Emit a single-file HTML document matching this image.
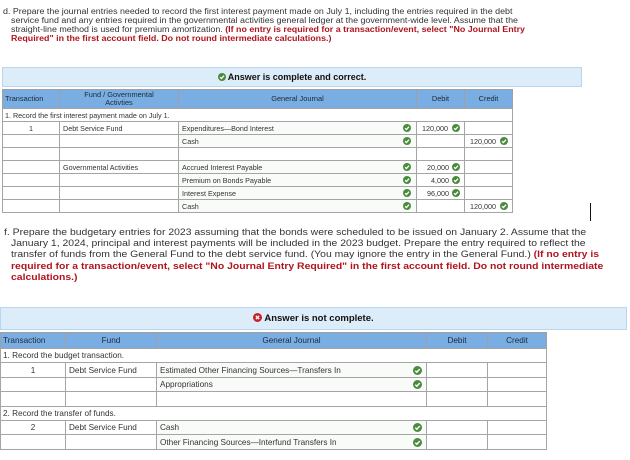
<!DOCTYPE html>
<html><head><meta charset="utf-8"><style>
*{margin:0;padding:0;box-sizing:border-box}
body{width:630px;height:460px;background:#fff;position:relative;overflow:hidden;font-family:"Liberation Sans",Arial,sans-serif;color:#222}
.a{position:absolute;white-space:nowrap;transform-origin:0 0}
.p1{font-size:8px;color:#333;line-height:9px;transform:scaleX(1.11)}
.p2{font-size:9.6px;color:#333;line-height:11px;transform:scaleX(1.085)}
.r{color:#b0141e;font-weight:bold}
.ban{position:absolute;background:#dcecf9;border:1px solid #b9d6f0;font-size:9px;font-weight:bold;color:#111;text-align:center}
.h{position:absolute;background:#7aaee2;border:1px solid #a0a0a0;font-size:7.4px;color:#1a2a3a;display:flex;align-items:center;justify-content:center;text-align:center;line-height:8px}
.c{position:absolute;border:1px solid #a5a5a5;font-size:7.2px;color:#333;display:flex;align-items:center;padding-left:3px;background:#fff}
.g{background:#f8fbf7}
.k{position:absolute;width:8px;height:8px}
.t2 .c,.t2 .h{font-size:8.2px}
</style></head><body>
<svg width="0" height="0" style="position:absolute"><defs><symbol id="ck" viewBox="0 0 10 10"><circle cx="5" cy="5" r="5" fill="#4a8b3d"/><path d="M2.6 5.2 L4.3 6.9 L7.5 3.4" stroke="#fff" stroke-width="1.6" fill="none"/></symbol></defs></svg>

<div class="a p1" style="left:3px;top:7px">d. Prepare the journal entries needed to record the first interest payment made on July 1, including the entries required in the debt</div>
<div class="a p1" style="left:11px;top:16px">service fund and any entries required in the governmental activities general ledger at the government-wide level. Assume that the</div>
<div class="a p1" style="left:11px;top:25px">straight-line method is used for premium amortization. <span class="r">(If no entry is required for a transaction/event, select "No Journal Entry</span></div>
<div class="a p1 r" style="left:11px;top:34px">Required" in the first account field. Do not round intermediate calculations.)</div>

<div class="ban" style="left:2px;top:67px;width:580px;height:20px;line-height:19px"><svg class="k" style="position:relative;top:1px;margin-right:2px" viewBox="0 0 10 10"><use href="#ck"/></svg>Answer is complete and correct.</div>

<div class="h" style="left:2px;top:89px;width:58px;height:20px;justify-content:flex-start;padding-left:2px">Transaction</div>
<div class="h" style="left:59px;top:89px;width:120px;height:20px">Fund / Governmental<br>Activties</div>
<div class="h" style="left:178px;top:89px;width:239px;height:20px">General Journal</div>
<div class="h" style="left:416px;top:89px;width:49px;height:20px">Debit</div>
<div class="h" style="left:464px;top:89px;width:49px;height:20px">Credit</div>

<div class="c" style="left:2px;top:108px;width:511px;height:14px;padding-left:2px">1. Record the first interest payment made on July 1.</div>

<div class="c" style="left:2px;top:121px;width:58px;height:14px;justify-content:center;padding:0">1</div>
<div class="c" style="left:59px;top:121px;width:120px;height:14px">Debt Service Fund</div>
<div class="c g" style="left:178px;top:121px;width:239px;height:14px">Expenditures—Bond Interest</div>
<div class="c" style="left:416px;top:121px;width:49px;height:14px">&nbsp;120,000</div>
<div class="c" style="left:464px;top:121px;width:49px;height:14px"></div>

<div class="c" style="left:2px;top:134px;width:58px;height:14px"></div>
<div class="c" style="left:59px;top:134px;width:120px;height:14px"></div>
<div class="c g" style="left:178px;top:134px;width:239px;height:14px">Cash</div>
<div class="c" style="left:416px;top:134px;width:49px;height:14px"></div>
<div class="c" style="left:464px;top:134px;width:49px;height:14px">&nbsp;120,000</div>

<div class="c" style="left:2px;top:147px;width:58px;height:14px"></div>
<div class="c" style="left:59px;top:147px;width:120px;height:14px"></div>
<div class="c" style="left:178px;top:147px;width:239px;height:14px"></div>
<div class="c" style="left:416px;top:147px;width:49px;height:14px"></div>
<div class="c" style="left:464px;top:147px;width:49px;height:14px"></div>

<div class="c" style="left:2px;top:160px;width:58px;height:14px"></div>
<div class="c" style="left:59px;top:160px;width:120px;height:14px">Governmental Activities</div>
<div class="c g" style="left:178px;top:160px;width:239px;height:14px">Accrued Interest Payable</div>
<div class="c" style="left:416px;top:160px;width:49px;height:14px;padding-left:10px">20,000</div>
<div class="c" style="left:464px;top:160px;width:49px;height:14px"></div>

<div class="c" style="left:2px;top:173px;width:58px;height:14px"></div>
<div class="c" style="left:59px;top:173px;width:120px;height:14px"></div>
<div class="c g" style="left:178px;top:173px;width:239px;height:14px">Premium on Bonds Payable</div>
<div class="c" style="left:416px;top:173px;width:49px;height:14px;padding-left:14px">4,000</div>
<div class="c" style="left:464px;top:173px;width:49px;height:14px"></div>

<div class="c" style="left:2px;top:186px;width:58px;height:14px"></div>
<div class="c" style="left:59px;top:186px;width:120px;height:14px"></div>
<div class="c g" style="left:178px;top:186px;width:239px;height:14px">Interest Expense</div>
<div class="c" style="left:416px;top:186px;width:49px;height:14px;padding-left:10px">96,000</div>
<div class="c" style="left:464px;top:186px;width:49px;height:14px"></div>

<div class="c" style="left:2px;top:199px;width:58px;height:14px"></div>
<div class="c" style="left:59px;top:199px;width:120px;height:14px"></div>
<div class="c g" style="left:178px;top:199px;width:239px;height:14px">Cash</div>
<div class="c" style="left:416px;top:199px;width:49px;height:14px"></div>
<div class="c" style="left:464px;top:199px;width:49px;height:14px">&nbsp;120,000</div>

<svg class="k" style="left:403px;top:124px"><use href="#ck"/></svg>
<svg class="k" style="left:403px;top:137px"><use href="#ck"/></svg>
<svg class="k" style="left:403px;top:163px"><use href="#ck"/></svg>
<svg class="k" style="left:403px;top:176px"><use href="#ck"/></svg>
<svg class="k" style="left:403px;top:189px"><use href="#ck"/></svg>
<svg class="k" style="left:403px;top:202px"><use href="#ck"/></svg>
<svg class="k" style="left:452px;top:124px"><use href="#ck"/></svg>
<svg class="k" style="left:452px;top:163px"><use href="#ck"/></svg>
<svg class="k" style="left:452px;top:176px"><use href="#ck"/></svg>
<svg class="k" style="left:452px;top:189px"><use href="#ck"/></svg>
<svg class="k" style="left:500px;top:137px"><use href="#ck"/></svg>
<svg class="k" style="left:500px;top:202px"><use href="#ck"/></svg>

<div class="a" style="left:590px;top:203px;width:1px;height:18px;background:#111"></div>

<div class="a p2" style="left:4px;top:227px">f. Prepare the budgetary entries for 2023 assuming that the bonds were scheduled to be issued on January 2. Assume that the</div>
<div class="a p2" style="left:11px;top:238px">January 1, 2024, principal and interest payments will be included in the 2023 budget. Prepare the entry required to reflect the</div>
<div class="a p2" style="left:11px;top:249px">transfer of funds from the General Fund to the debt service fund. (You may ignore the entry in the General Fund.) <span class="r">(If no entry is</span></div>
<div class="a p2 r" style="left:11px;top:261px">required for a transaction/event, select "No Journal Entry Required" in the first account field. Do not round intermediate</div>
<div class="a p2 r" style="left:11px;top:272px">calculations.)</div>

<div class="ban" style="left:0px;top:307px;width:627px;height:23px;line-height:22px;font-size:9.5px"><svg class="k" style="position:relative;top:1px;margin-right:2px;width:9px;height:9px" viewBox="0 0 10 10"><circle cx="5" cy="5" r="5" fill="#c8202a"/><path d="M3.2 3.2L6.8 6.8M6.8 3.2L3.2 6.8" stroke="#fff" stroke-width="1.5"/></svg>Answer is not complete.</div>

<div class="t2">
<div class="h" style="left:0px;top:332px;width:66px;height:17px;justify-content:flex-start;padding-left:2px">Transaction</div>
<div class="h" style="left:65px;top:332px;width:92px;height:17px">Fund</div>
<div class="h" style="left:156px;top:332px;width:271px;height:17px">General Journal</div>
<div class="h" style="left:426px;top:332px;width:62px;height:17px">Debit</div>
<div class="h" style="left:487px;top:332px;width:60px;height:17px">Credit</div>

<div class="c" style="left:0px;top:348px;width:547px;height:15px;padding-left:2px">1. Record the budget transaction.</div>

<div class="c" style="left:0px;top:362px;width:66px;height:16px;justify-content:center;padding:0">1</div>
<div class="c" style="left:65px;top:362px;width:92px;height:16px">Debt Service Fund</div>
<div class="c g" style="left:156px;top:362px;width:271px;height:16px">Estimated Other Financing Sources—Transfers In</div>
<div class="c" style="left:426px;top:362px;width:62px;height:16px"></div>
<div class="c" style="left:487px;top:362px;width:60px;height:16px"></div>

<div class="c" style="left:0px;top:377px;width:66px;height:15px"></div>
<div class="c" style="left:65px;top:377px;width:92px;height:15px"></div>
<div class="c g" style="left:156px;top:377px;width:271px;height:15px">Appropriations</div>
<div class="c" style="left:426px;top:377px;width:62px;height:15px"></div>
<div class="c" style="left:487px;top:377px;width:60px;height:15px"></div>

<div class="c" style="left:0px;top:391px;width:66px;height:16px"></div>
<div class="c" style="left:65px;top:391px;width:92px;height:16px"></div>
<div class="c" style="left:156px;top:391px;width:271px;height:16px"></div>
<div class="c" style="left:426px;top:391px;width:62px;height:16px"></div>
<div class="c" style="left:487px;top:391px;width:60px;height:16px"></div>

<div class="c" style="left:0px;top:406px;width:547px;height:15px;padding-left:2px">2. Record the transfer of funds.</div>

<div class="c" style="left:0px;top:420px;width:66px;height:15px;justify-content:center;padding:0">2</div>
<div class="c" style="left:65px;top:420px;width:92px;height:15px">Debt Service Fund</div>
<div class="c g" style="left:156px;top:420px;width:271px;height:15px">Cash</div>
<div class="c" style="left:426px;top:420px;width:62px;height:15px"></div>
<div class="c" style="left:487px;top:420px;width:60px;height:15px"></div>

<div class="c" style="left:0px;top:434px;width:66px;height:16px"></div>
<div class="c" style="left:65px;top:434px;width:92px;height:16px"></div>
<div class="c g" style="left:156px;top:434px;width:271px;height:16px">Other Financing Sources—Interfund Transfers In</div>
<div class="c" style="left:426px;top:434px;width:62px;height:16px"></div>
<div class="c" style="left:487px;top:434px;width:60px;height:16px"></div>
</div>

<svg class="k" style="left:413px;top:366px;width:9px;height:9px"><use href="#ck"/></svg>
<svg class="k" style="left:413px;top:380px;width:9px;height:9px"><use href="#ck"/></svg>
<svg class="k" style="left:413px;top:423px;width:9px;height:9px"><use href="#ck"/></svg>
<svg class="k" style="left:413px;top:438px;width:9px;height:9px"><use href="#ck"/></svg>
</body></html>
